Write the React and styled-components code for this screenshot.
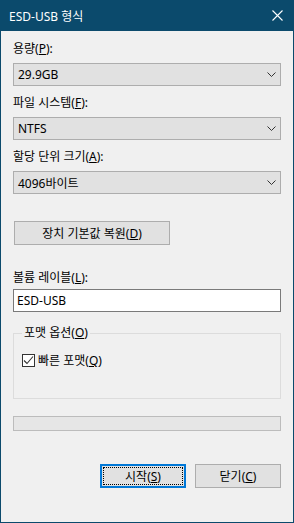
import React from 'react'
import styled, { createGlobalStyle } from 'styled-components'

const GlobalStyle = createGlobalStyle`
  html, body {
    margin: 0;
    padding: 0;
    background: #f0f0f0;
  }
  * {
    box-sizing: border-box;
  }
`;

const Window = styled.div`
  width: 294px;
  height: 523px;
  display: flex;
  flex-direction: column;
  background: #f0f0f0;
  border: 1px solid #0b4a6c;
  border-top: none;
  font-family: "Noto Sans", "Noto Sans CJK KR", sans-serif;
  font-size: 12px;
  color: #000;
`;

const TitleBar = styled.div`
  height: 31px;
  margin: 0 -1px;
  flex-shrink: 0;
  display: flex;
  align-items: center;
  justify-content: space-between;
  padding: 0 11px 0 9px;
  background: #0b4a6c;
  color: #fff;
  font-size: 12px;
`;

const Body = styled.div`
  flex: 1;
  display: flex;
  flex-direction: column;
  padding: 10px 12px 0 12px;
`;

const Label = styled.div`
  height: 16px;
  line-height: 16px;
  margin-bottom: ${p => p.$gap ?? 6}px;
  margin-top: ${p => p.$top ?? 0}px;
`;

const Combo = styled.div`
  height: 23px;
  display: flex;
  align-items: center;
  justify-content: space-between;
  padding: 0 4px 0 4px;
  background: #e1e1e1;
  border: 1px solid #adadad;
`;

const TextBox = styled.div`
  height: 23px;
  display: flex;
  align-items: center;
  padding: 0 3px;
  background: #fff;
  border: 1px solid #7a7a7a;
`;

const PushButton = styled.div`
  position: relative;
  width: ${p => p.$w}px;
  height: 24px;
  display: flex;
  align-items: center;
  justify-content: center;
  background: #e1e1e1;
  border: ${p => (p.$default ? '2px solid #0078d7' : '1px solid #adadad')};

  ${p => p.$default && `
    &::after {
      content: '';
      position: absolute;
      inset: 1px;
      border: 1px dotted #000;
    }
  `}
`;

const Group = styled.fieldset`
  margin: 13px 0 0 0;
  padding: 10px 8px 0 8px;
  height: 74px;
  border: 1px solid #dcdcdc;
`;

const Legend = styled.legend`
  padding: 0 2px;
  margin-left: 0;
  line-height: 16px;
`;

const CheckRow = styled.div`
  display: flex;
  align-items: center;
  gap: 3px;
`;

const Box = styled.span`
  width: 13px;
  height: 13px;
  display: flex;
  align-items: center;
  justify-content: center;
  background: #fff;
  border: 1px solid #333;
`;

const Progress = styled.div`
  margin-top: 17px;
  height: 15px;
  background: #e6e6e6;
  border: 1px solid #bcbcbc;
`;

const Footer = styled.div`
  margin-top: 33px;
  display: flex;
  justify-content: flex-end;
  gap: 9px;
`;

const Chevron = () => (
  <svg width="9" height="5" viewBox="0 0 9 5">
    <polyline points="0.5,0.5 4.5,4.5 8.5,0.5" fill="none" stroke="#333" strokeWidth="1" />
  </svg>
)

function Dropdown({ value }) {
  return (
    <Combo>
      <span>{value}</span>
      <Chevron />
    </Combo>
  )
}

export default function App() {
  return (
    <>
      <GlobalStyle />
      <Window>
        <TitleBar>
          <span>ESD-USB 형식</span>
          <svg width="11" height="11" viewBox="0 0 11 11">
            <path d="M0.5 0.5 L10.5 10.5 M10.5 0.5 L0.5 10.5" stroke="#fff" strokeWidth="1.1" />
          </svg>
        </TitleBar>
        <Body>
          <Label>용량(<u>P</u>):</Label>
          <Dropdown value="29.9GB" />

          <Label $top={9}>파일 시스템(<u>F</u>):</Label>
          <Dropdown value="NTFS" />

          <Label $top={9}>할당 단위 크기(<u>A</u>):</Label>
          <Dropdown value="4096바이트" />

          <div style={{ marginTop: 27, paddingLeft: 1 }}>
            <PushButton $w={156}>장치 기본값 복원(<u>D</u>)</PushButton>
          </div>

          <Label $top={25} $gap={3}>볼륨 레이블(<u>L</u>):</Label>
          <TextBox>ESD-USB</TextBox>

          <Group>
            <Legend>포맷 옵션(<u>O</u>)</Legend>
            <CheckRow>
              <Box>
                <svg width="11" height="11" viewBox="0 0 11 11">
                  <polyline points="1,5.5 4,8.5 10,1.5" fill="none" stroke="#333" strokeWidth="1.1" />
                </svg>
              </Box>
              <span>빠른 포맷(<u>Q</u>)</span>
            </CheckRow>
          </Group>

          <Progress />

          <Footer>
            <PushButton $w={86} $default>시작(<u>S</u>)</PushButton>
            <PushButton $w={86}>닫기(<u>C</u>)</PushButton>
          </Footer>
        </Body>
      </Window>
    </>
  )
}
